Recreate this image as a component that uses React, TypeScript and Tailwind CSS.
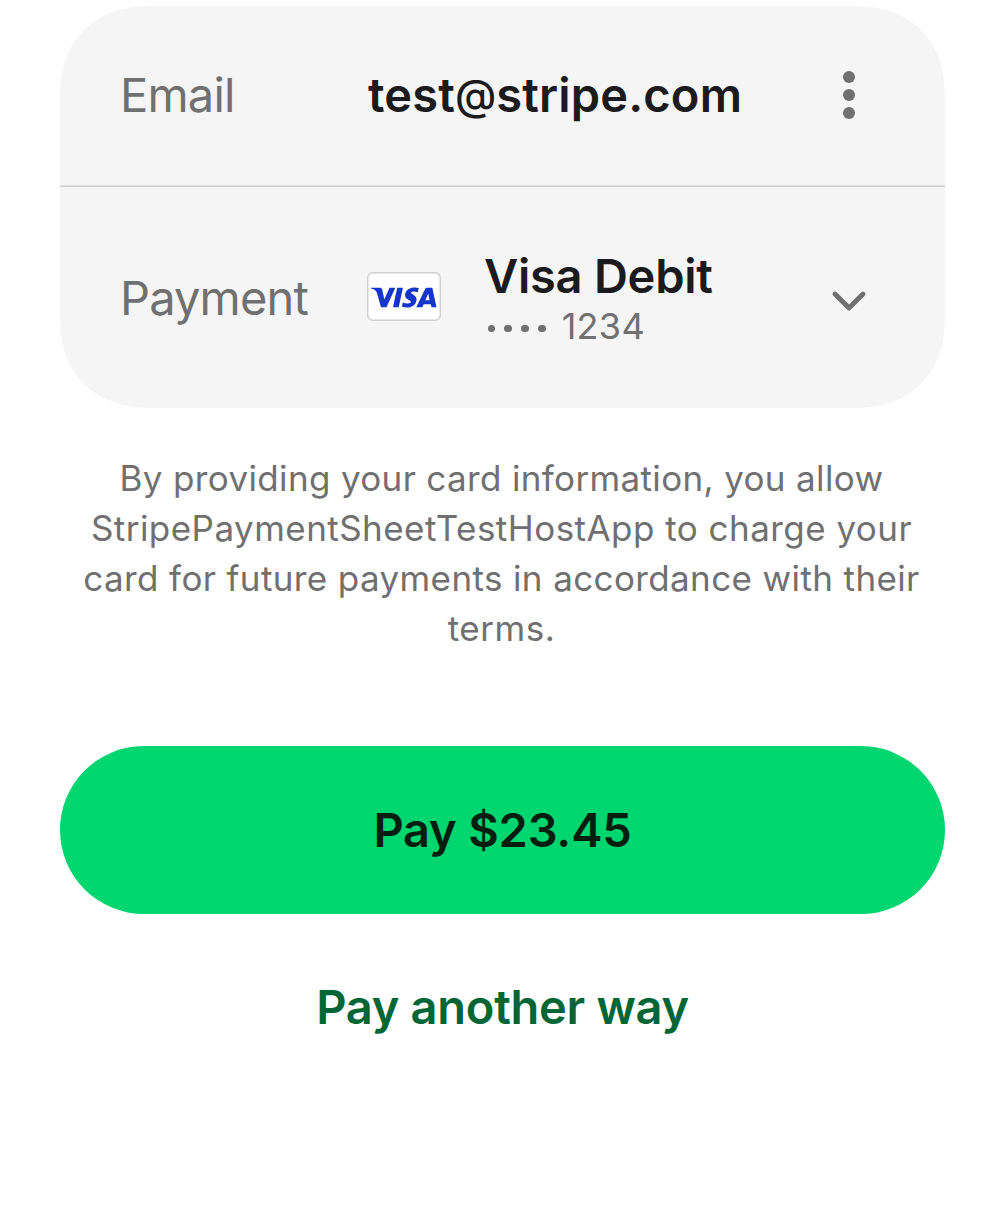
const text = "block whitespace-nowrap";

function VisaBadge() {
  return (
    <svg className="mb-[2px] block h-[50px] w-[75px]" viewBox="0 0 75 50">
      <rect x="1.700" y="0.700" width="72.600" height="47.600" rx="5.500" fill="#fff" stroke="#d0d0d0" strokeWidth="1.500" />
      <g fill="#1434cb" transform="translate(0 -0.500)">
        <path d="M5 16.200h8.500c1.500 0 2.400.6 2.800 2L18.300 28l5.200-11.800h5.800L20.500 35.800h-5.500L10.800 21C9.800 18.500 7.800 17.500 4.800 16.900Z" />
        <path d="M31.200 16.200h5.700l-4.200 19.600h-5.700Z" />
        <path d="M52.700 16.500l-.9 4.300c-3-1.300-6.500-1.200-6.700.2-.2 2 6 2.400 5.400 7.700-.8 6.400-8 8.700-14.600 6.600l.9-4.400c3.800 1.600 7.900 1.300 8.100-.4.2-2.200-6.200-2.300-5.800-7.300.5-6.400 8.200-8.500 13.600-6.700Z" />
        <path fillRule="evenodd" d="M61.300 16.200H66.300l4.200 19.600h-5l-.7-3h-7.100l-1.400 3h-6l8.700-18c.5-1.200 1-1.600 2.300-1.600Zm.9 5.700-2.900 6.800h4.300Z" />
      </g>
    </svg>
  );
}

export default function App() {
  return (
    <main className="min-h-[1217px] w-[1005px] bg-white px-[60px] pt-[6px] font-['Inter',sans-serif] text-[#1b1b1d]">
      <section className="h-[402px] overflow-hidden rounded-[84px] bg-[#f5f5f5] supports-[corner-shape:squircle]:rounded-[92px] supports-[corner-shape:squircle]:[corner-shape:superellipse(1.2)]">
        <div className="flex h-[179px] items-center pl-[60px] pr-[87px]">
          <span className={`${text} w-[248px] text-[47px] tracking-[-0.8px] text-[#707070]`}>Email</span>
          <span className={`${text} flex-1 text-[47px] font-semibold tracking-[0.15px]`}>test<span className="relative -top-[2px] text-[42px] font-medium">@</span>stripe.com</span>
          <svg className="mb-[2px] h-[50px] w-[18px]" viewBox="0 0 18 50" fill="#707070">
            <circle cx="9" cy="7" r="6" /><circle cx="9" cy="25" r="6" /><circle cx="9" cy="43" r="6" />
          </svg>
        </div>
        <div className="h-[2px] border-b border-[#cccccc] bg-[#e2e2e2]" />
        <div className="flex h-[221px] items-center pl-[60px] pr-[77px]">
          <span className={`${text} mt-[2px] w-[246px] text-[47px] tracking-[-0.85px] text-[#707070]`}>Payment</span>
          <VisaBadge />
          <div className="ml-[43px] flex-1">
            <span className={`${text} text-[47px] leading-[56px] font-semibold tracking-[-0.25px]`}>Visa Debit</span>
            <span className="flex items-center pl-[3.500px] text-[36px] leading-[44px] text-[#707070]">
              <span className="mr-[16px] mt-[6px] flex gap-[9.400px]">
                <i className="size-[7.500px] rounded-full bg-[#707070]" /><i className="size-[7.500px] rounded-full bg-[#707070]" /><i className="size-[7.500px] rounded-full bg-[#707070]" /><i className="size-[7.500px] rounded-full bg-[#707070]" />
              </span>
              <span className="tracking-[0.3px]">1234</span>
            </span>
          </div>
          <svg className="mt-[8px] h-[24px] w-[38px]" viewBox="0 0 38 24" fill="none" stroke="#707070" strokeWidth="4.900" strokeLinecap="round" strokeLinejoin="round"><path d="M5 4 19 18 33 4" /></svg>
        </div>
      </section>
      <p className="mt-[45px] mr-[2px] flex flex-col items-center text-[35px] leading-[50px] text-[#707070]">
        <span className={`${text} tracking-[0.35px]`}>By providing your card information, you allow</span>
        <span className={`${text} tracking-[0.46px]`}>StripePaymentSheetTestHostApp to charge your</span>
        <span className={`${text} tracking-[0.38px]`}>card for future payments in accordance with their</span>
        <span className={`${text} tracking-[0.5px]`}>terms.</span>
      </p>
      <button className="mt-[93px] flex h-[168px] w-full items-center justify-center rounded-full bg-[#00d66f] text-[47px] font-semibold tracking-[-0.2px] text-[#011e0f]">Pay $23.45</button>
      <button className="mt-[65px] flex h-[56px] w-full items-center justify-center text-[47px] font-semibold tracking-[-0.28px] text-[#006635]">Pay another way</button>
    </main>
  );
}
